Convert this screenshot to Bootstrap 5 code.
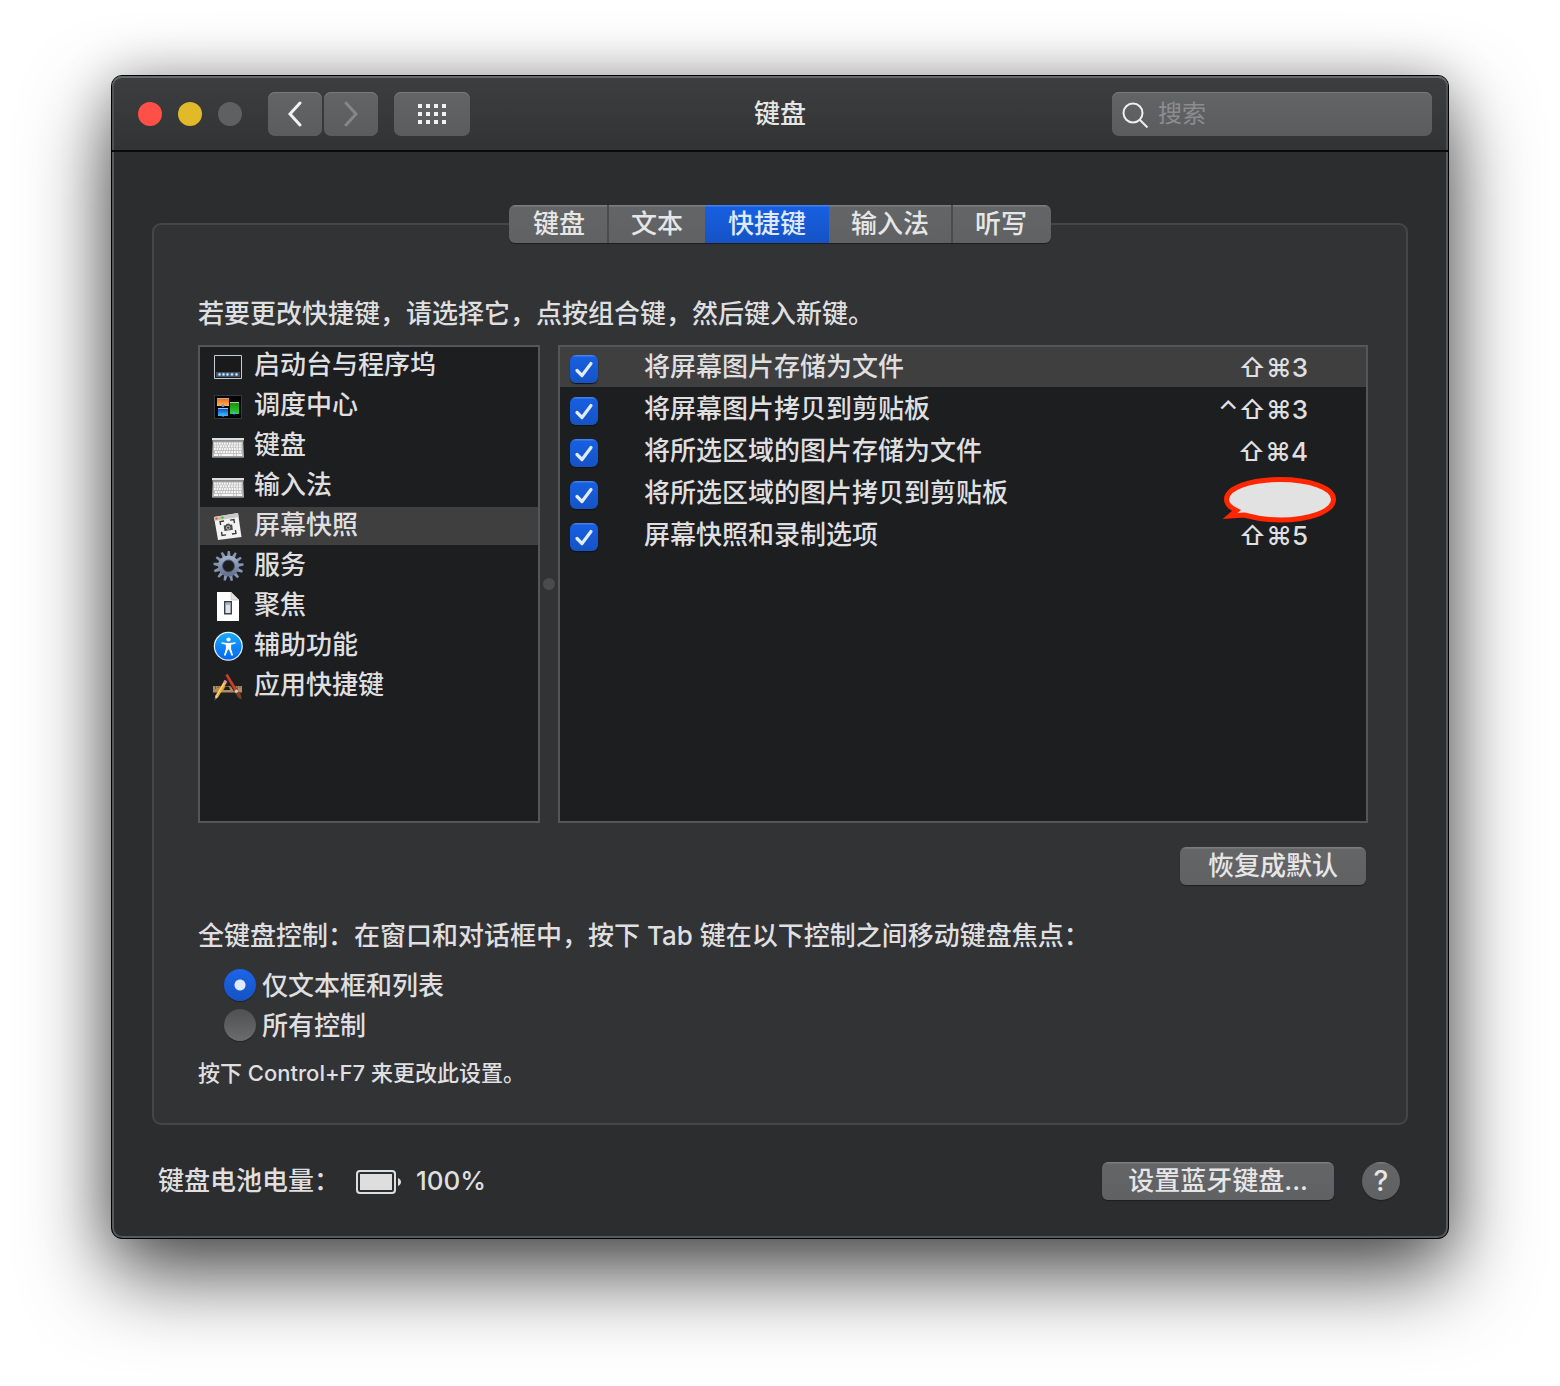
<!DOCTYPE html>
<html lang="zh-CN" data-bs-theme="dark">
<head>
<meta charset="utf-8">
<meta name="viewport" content="width=device-width, initial-scale=1">
<title>键盘</title>
<link href="https://cdn.jsdelivr.net/npm/bootstrap@5.3.0/dist/css/bootstrap.min.css" rel="stylesheet">
<style>
  body { background: #fff; color: #dfdfe0; font-family: Inter, "Noto Sans CJK SC", sans-serif; font-size: 26px; font-weight: 500; line-height: 38px; padding: 75px 111px 147px; }
  .pref-window { background: #2c2d2f; border: 1px solid #000; border-radius: 11px; box-shadow: inset 0 0 0 2px #58595b, 0 36px 84px rgba(0,0,0,.68), 0 0 50px rgba(0,0,0,.22); }
  .titlebar { height: 76px; padding: 2px 16px 0; background: linear-gradient(#3d3e40, #323335); border-bottom: 2px solid #0b0b0c; border-radius: 10px 10px 0 0; box-shadow: inset 0 2px #68696b, inset 2px 0 #505153, inset -2px 0 #505153; }
  .side { flex: 1 1 0; }
  .lights { margin: 0 26px 0 10px; }
  .light { width: 24px; height: 24px; border-radius: 50%; border: 0; padding: 0; background: #5f6062; }
  .light-close { background: #ff5048; }
  .light-min { background: #e2b928; }
  .nav-pair { gap: 2px; }
  .tool { height: 44px; width: 54px; border: 0; border-radius: 7px; padding: 0; color: #f2f2f2; background: linear-gradient(#636466, #5b5c5e); box-shadow: inset 0 1px #7a7b7d; display: flex; align-items: center; justify-content: center; }
  .tool-wide { width: 76px; }
  .tool:disabled { color: #858688; }
  .search-box { width: 320px; height: 44px; border-radius: 7px; padding: 0 10px; gap: 9px; background: linear-gradient(#636466, #5b5c5e); box-shadow: inset 0 1px #7a7b7d; }
  .search-box input { background: none; border: 0; outline: 0; padding: 0; min-width: 0; font-size: 24px; line-height: 32px; color: #eee; }
  .search-box input::placeholder { color: #8c8d8f; opacity: 1; }
  .win-title { font-size: 26px; line-height: 38px; color: #e6e6e6; margin: 0; font-weight: 500; }
  .win-body { padding: 53px 40px 38px; }
  .seg { position: relative; z-index: 1; margin-bottom: -20px; border-radius: 6px; overflow: hidden; box-shadow: 0 1px 1px #1d1d1e; }
  .seg button { height: 38px; border: 0; border-right: 2px solid #4b4c4e; padding: 0 22px; color: #e6e6e7; background: linear-gradient(#7c7d7f 1px, #646567 2px, #606163); font-size: 26px; font-weight: 500; line-height: 36px; }
  .seg button:first-child { padding-left: 24px; }
  .seg button:last-child { border-right: 0; padding-right: 24px; }
  .seg button.active { color: #dfe9fb; background: linear-gradient(#4680ea 1px, #175fe2 2px, #1553c4); }
  .seg button.active, .seg .before-active { border-right: 0; }
  .seg button.active { padding: 0 23px; }
  .pane { background: #323335; border: 2px solid #454648; border-radius: 9px; padding: 70px 38px 34px 44px; }
  .listbox { background: #1d1e20; border: 2px solid #555658; height: 478px; margin: 0; }
  .cats { width: 342px; }
  .cats li { margin-bottom: 2px; }
  .cats a { display: flex; align-items: center; gap: 10px; height: 38px; padding: 0 12px; color: inherit; text-decoration: none; line-height: 34px; }
  .cats span { height: 36px; }
  .chosen { background: #3f3f40; }
  .cats svg { width: 32px; height: 32px; flex: none; }
  .grip { width: 18px; }
  .grip i { width: 12px; height: 12px; border-radius: 50%; background: #4a4b4d; }
  .keys li { display: flex; align-items: center; height: 40px; margin-bottom: 2px; padding: 0 58px 0 10px; position: relative; }
  .keys label { margin-left: 46px; flex: 1; line-height: 38px; }
  .keys kbd { font: inherit; background: none; color: inherit; padding: 2px 0 0; }
  .keys .form-check-input { width: 28px; height: 28px; margin: 4px 0 0; border: 0; border-radius: 6px; background: linear-gradient(#4680ea 1px, #175fe2 2px, #1553c4); box-shadow: 0 1px 1px #111; appearance: none; }
  .tick { position: absolute; left: 10px; top: 8px; width: 28px; height: 28px; pointer-events: none; }
  .bubble { position: absolute; right: 28px; top: 1px; width: 118px; height: 50px; z-index: 2; }
  .push { height: 38px; border: 0; border-radius: 6px; padding: 0 26px; color: #e6e6e7; background: linear-gradient(#7c7d7f 1px, #646567 2px, #606163); box-shadow: 0 1px 1px #1d1d1e; font-size: 26px; font-weight: 500; line-height: 36px; white-space: nowrap; }
  .push-reset { margin-right: 2px; padding: 0 28px; }
  .help { width: 38px; padding: 0; border-radius: 50%; margin-left: 28px; font-size: 28px; }
  legend { font-size: 26px; line-height: 38px; margin: 32px 0 0; }
  .opts { padding: 10px 0 0 26px; }
  .opts .form-check-input { width: 32px; height: 32px; margin: 0; border: 0; float: none; background: linear-gradient(#4f5052, #6b6c6e); box-shadow: 0 1px 1px #222; }
  .opts .form-check-input:checked { background: radial-gradient(circle, #dfe9fb 5px, transparent 6px), linear-gradient(#1c64e8, #1553c4); }
  .opts div { height: 40px; gap: 6px; }
  .opts label { line-height: 40px; padding-top: 2px; }
  .note { font-size: 22px; line-height: 32px; margin: 12px 0 0; }
  .foot { padding: 37px 8px 0 6px; }
  .battery { width: 46px; height: 26px; margin: 2px 14px 0 16px; }
</style>
<script src="https://cdn.jsdelivr.net/npm/bootstrap@5.3.0/dist/js/bootstrap.bundle.min.js"></script>
</head>
<body>
<main class="pref-window">
  <header class="titlebar d-flex align-items-center">
    <div class="side d-flex align-items-center">
      <div class="lights d-flex gap-3">
        <button class="light light-close" aria-label="关闭"></button>
        <button class="light light-min" aria-label="最小化"></button>
        <button class="light" aria-label="缩放" disabled></button>
      </div>
      <div class="nav-pair d-flex">
        <button class="tool" aria-label="后退"><svg width="16" height="26" viewBox="0 0 16 26" fill="none" stroke="currentColor" stroke-width="3" stroke-linecap="round"><path d="M13 2 3 13 13 24"/></svg></button>
        <button class="tool" aria-label="前进" disabled><svg width="16" height="26" viewBox="0 0 16 26" fill="none" stroke="currentColor" stroke-width="3" stroke-linecap="round"><path d="M3 2 13 13 3 24"/></svg></button>
      </div>
      <button class="tool tool-wide ms-3" aria-label="显示全部"><svg width="28" height="20" fill="currentColor"><path d="M0 0h4v4H0zM8 0h4v4H8zM16 0h4v4h-4zM24 0h4v4h-4zM0 8h4v4H0zM8 8h4v4H8zM16 8h4v4h-4zM24 8h4v4h-4zM0 16h4v4H0zM8 16h4v4H8zM16 16h4v4h-4zM24 16h4v4h-4z"/></svg></button>
    </div>
    <h1 class="win-title">键盘</h1>
    <div class="side d-flex justify-content-end">
      <div class="search-box d-flex align-items-center">
        <svg width="27" height="27" viewBox="0 0 27 27" fill="none" stroke="#efefef" stroke-width="2" class="flex-shrink-0"><circle cx="11" cy="12" r="9.5"/><path d="m18 19 7.500 7.500"/></svg>
        <input type="search" class="flex-grow-1" placeholder="搜索" aria-label="搜索">
      </div>
    </div>
  </header>

  <div class="win-body">
    <div class="d-flex justify-content-center">
      <div class="seg d-flex" role="tablist">
        <button role="tab">键盘</button><button role="tab" class="before-active">文本</button><button role="tab" class="active" aria-selected="true">快捷键</button><button role="tab">输入法</button><button role="tab">听写</button>
      </div>
    </div>
    <section class="pane">
      <p class="mb-2 pb-1">若要更改快捷键，请选择它，点按组合键，然后键入新键。</p>
      <div class="d-flex">
        <ul class="listbox cats list-unstyled">
          <li><a href="#"><svg viewBox="0 0 32 32"><path fill="#1a1a1b" stroke="#c3ced6" d="M2.500 5.500h27v23h-27z"/><path fill="#4b5058" d="M4 22h24v5H4z"/><g fill="#cfe6fb" stroke="#4a8cd0" stroke-width=".6"><circle cx="7.500" cy="24.500" r="1.400"/><circle cx="11.500" cy="24.500" r="1.400"/><circle cx="15.500" cy="24.500" r="1.400"/><circle cx="20" cy="24.500" r="1.400"/><circle cx="24.500" cy="24.500" r="1.400"/></g></svg><span>启动台与程序坞</span></a></li>
          <li><a href="#"><svg viewBox="0 0 32 32"><defs><linearGradient id="or" x2="0" y2="1"><stop stop-color="#ff6a10"/><stop offset="1" stop-color="#ffb45a"/></linearGradient><linearGradient id="gr" x2="0" y2="1"><stop stop-color="#128a12"/><stop offset="1" stop-color="#35d22e"/></linearGradient><linearGradient id="bl" x2="0" y2="1"><stop stop-color="#0c3fd0"/><stop offset="1" stop-color="#38c2ea"/></linearGradient></defs><path fill="#050505" stroke="#343a3e" d="M2.500 5.500h27v23h-27z"/><path fill="url(#or)" d="M5 9h12v7H5z"/><path fill="url(#gr)" d="M18 12h9v12h-9z"/><path fill="url(#bl)" d="M6 18h10v8H6z"/><path stroke="#f2e8dc" stroke-opacity=".75" d="M5 8.500h12M18 12.500h9M6 18.500h10"/><g fill="#46a8ff"><circle cx="11" cy="15.500" r="1.500"/><circle cx="22" cy="23" r="1.500"/><circle cx="11" cy="25" r="1.700"/></g></svg><span>调度中心</span></a></li>
          <li><a href="#"><svg viewBox="0 0 32 32"><defs><g id="kb"><path fill="#b4b4b4" d="M1 8h30l1 19.500H0z"/><path fill="#dedede" d="M0 8h32v2H0z"/><path fill="#808080" d="M0 10.200h32v1.200H0zM1 26.500h30v1.200H1z"/><g stroke="#f6f6f6" stroke-width="2.200"><path stroke-dasharray="1.800 .7" d="M2 13.600h28M2 19.200h28"/><path stroke-dasharray="2 .7" d="M2.500 16.400h27.500M3 22h27"/><path d="M2 24.900h4M6.800 24.900h1.800M9.400 24.900h12M22.200 24.900h1.800M24.800 24.900H30"/></g></g></defs><use href="#kb"/></svg><span>键盘</span></a></li>
          <li><a href="#"><svg viewBox="0 0 32 32"><use href="#kb"/></svg><span>输入法</span></a></li>
          <li><a href="#" class="chosen" aria-current="true"><svg viewBox="0 0 32 32"><path fill="#f3f3f3" d="M2 7 26 3l3.500 24L6 30z"/><path fill="#c9c9c9" d="M2 7 26 3l.6 4L2.700 11z"/><circle cx="4.500" cy="8.600" r="1.200" fill="#f0524b"/><circle cx="7.500" cy="8.100" r="1.200" fill="#e9b32e"/><circle cx="10.500" cy="7.600" r="1.200" fill="#3cb54a"/><g transform="rotate(-8 16 17.500)"><path fill="none" stroke="#3b3b3b" stroke-width="1.400" d="M9 14v-3.500h4M19 10.500h4V14M23 21v3.500h-4M13 24.500H9V21"/><path fill="#4a4a4a" d="M12 15h2l1-1.300h2.500l1 1.300h2v5.500H12z"/><circle cx="16.200" cy="17.700" r="1.700" fill="#444" stroke="#d8d8d8" stroke-width=".8"/></g></svg><span>屏幕快照</span></a></li>
          <li><a href="#"><svg viewBox="0 0 32 32"><defs><linearGradient id="ge" x2="0" y2="1"><stop stop-color="#9fafc8"/><stop offset="1" stop-color="#687390"/></linearGradient><path id="th" d="M15 7 15.700.9h2.200L18.600 7z"/></defs><g fill="#8794af"><use href="#th"/><use href="#th" transform="rotate(27.700 16.500 16)"/><use href="#th" transform="rotate(55.400 16.500 16)"/><use href="#th" transform="rotate(83 16.500 16)"/><use href="#th" transform="rotate(110.800 16.500 16)"/><use href="#th" transform="rotate(138.500 16.500 16)"/><use href="#th" transform="rotate(166 16.500 16)"/><use href="#th" transform="rotate(193.800 16.500 16)"/><use href="#th" transform="rotate(221.500 16.500 16)"/><use href="#th" transform="rotate(249 16.500 16)"/><use href="#th" transform="rotate(277 16.500 16)"/><use href="#th" transform="rotate(304.600 16.500 16)"/><use href="#th" transform="rotate(332.300 16.500 16)"/></g><circle cx="16.500" cy="16" r="8.200" fill="none" stroke="url(#ge)" stroke-width="4.600"/><circle cx="16.500" cy="16" r="6" fill="none" stroke="#4a546c" stroke-width="1"/></svg><span>服务</span></a></li>
          <li><a href="#"><svg viewBox="0 0 32 32"><path fill="#fff" d="M5 2h14l8 8v21H5z"/><path fill="#e2e2e2" stroke="#bbb" stroke-width=".6" d="M19 2v8h8z"/><path fill="#dde3ec" stroke="#39404c" stroke-width="1.400" d="M12.700 11.700h6.600v12h-6.600z"/><path fill="#a9b3c1" d="M14 13h4v2h-4z"/></svg><span>聚焦</span></a></li>
          <li><a href="#"><svg viewBox="0 0 32 32"><defs><linearGradient id="ac" x2="0" y2="1"><stop stop-color="#19aaf8"/><stop offset="1" stop-color="#0566f2"/></linearGradient></defs><circle cx="16.300" cy="16.300" r="14.500" fill="#e9f5ff"/><circle cx="16.300" cy="16.300" r="13.300" fill="url(#ac)"/><circle cx="16.500" cy="9.500" r="2.100" fill="#fff"/><path fill="#fff" d="M9.600 12.200c4 1 9.800 1 13.800 0l.3 1.300-4.600 1.200v4.300l2 6.200-1.500.5-2.600-6.200h-1l-2.600 6.200-1.500-.5 2-6.200v-4.300l-4.600-1.200z"/></svg><span>辅助功能</span></a></li>
          <li><a href="#"><svg viewBox="0 0 32 32"><path fill="#b08c5c" d="M1 16h29v6.500H1z"/><path stroke="#6b5130" stroke-width=".8" d="M3.500 16v3M6 16v2M8.500 16v3M11 16v2M18 16v2M20.500 16v3M25.500 16v3M28 16v2"/><path fill="#1d1e20" d="m13.500 16.500 3 0 2 3.500h-7z"/><path stroke="#30231c" stroke-width="4" d="m15 6 9 15"/><path stroke="#c93d2b" stroke-width="2.600" d="m14.500 4.500 9.300 15.500"/><path stroke="#d6d0c8" stroke-width="3" d="m23.500 20 2 3.200"/><path fill="#7a3e26" d="m24 23 3-1.500c2 2.500 2.500 5 2.500 8-3-1-5-3-5.500-6.500z"/><path stroke="#f3b43b" stroke-width="3.200" d="M13 12.500 5 26"/><path stroke="#ffda7b" d="M12.300 12.500 4.500 25.500"/><path stroke="#e991b7" stroke-width="3.200" d="m14 10.600-1.300 2.200"/><path fill="#ecd4ac" d="m3.500 25 3 1.800L2.700 30z"/><path fill="#333" d="m3 28 1.300.8L2.700 30z"/></svg><span>应用快捷键</span></a></li>
        </ul>
        <div class="grip d-flex align-items-center justify-content-center"><i></i></div>
        <ul class="listbox keys list-unstyled flex-grow-1">
          <li class="chosen"><input class="form-check-input" type="checkbox" id="k1" checked><svg class="tick" viewBox="0 0 28 28"><use href="#ck"/></svg><label for="k1">将屏幕图片存储为文件</label><kbd>⇧⌘3</kbd></li>
          <li><input class="form-check-input" type="checkbox" id="k2" checked><svg class="tick" viewBox="0 0 28 28"><use href="#ck"/></svg><label for="k2">将屏幕图片拷贝到剪贴板</label><kbd>⌃⇧⌘3</kbd></li>
          <li><input class="form-check-input" type="checkbox" id="k3" checked><svg class="tick" viewBox="0 0 28 28"><use href="#ck"/></svg><label for="k3">将所选区域的图片存储为文件</label><kbd>⇧⌘4</kbd></li>
          <li><input class="form-check-input" type="checkbox" id="k4" checked><svg class="tick" viewBox="0 0 28 28"><defs><path id="ck" fill="none" stroke="#e2ebfb" stroke-width="3.200" stroke-linecap="round" stroke-linejoin="round" d="m7 15.500 5 5L21 8.500"/></defs><use href="#ck"/></svg><label for="k4">将所选区域的图片拷贝到剪贴板</label>
            <svg class="bubble" viewBox="0 0 118 50"><path fill="#e2e2e2" stroke="#ff2600" stroke-width="5" d="M16.500 36.500C9 33 6.500 29 6.500 25.500 6.500 14 30 5.500 60 5.500S113.500 14 113.500 25.500 90 46 60 46C45 46 33 43.500 24 41L10 42z"/></svg></li>
          <li><input class="form-check-input" type="checkbox" id="k5" checked><svg class="tick" viewBox="0 0 28 28"><use href="#ck"/></svg><label for="k5">屏幕快照和录制选项</label><kbd>⇧⌘5</kbd></li>
        </ul>
      </div>
      <div class="d-flex justify-content-end mt-4"><button class="push push-reset">恢复成默认</button></div>
      <fieldset>
        <legend>全键盘控制：在窗口和对话框中，按下 Tab 键在以下控制之间移动键盘焦点：</legend>
        <div class="opts">
          <div class="d-flex align-items-center"><input class="form-check-input" type="radio" name="nav" id="r1" checked><label for="r1">仅文本框和列表</label></div>
          <div class="d-flex align-items-center"><input class="form-check-input" type="radio" name="nav" id="r2"><label for="r2">所有控制</label></div>
        </div>
      </fieldset>
      <p class="note">按下 Control+F7 来更改此设置。</p>
    </section>
    <footer class="foot d-flex align-items-center">
      <span>键盘电池电量：</span>
      <svg class="battery" viewBox="0 0 46 26"><rect x="1" y="2" width="38" height="22" rx="3" fill="none" stroke="#dedede" stroke-width="2"/><path fill="#dedede" d="M4 5h32v16H4zM42 9c4 1.500 4 6.500 0 8z"/></svg>
      <span>100%</span>
      <button class="push ms-auto">设置蓝牙键盘...</button>
      <button class="push help" aria-label="帮助">?</button>
    </footer>
  </div>
</main>
</body>
</html>
